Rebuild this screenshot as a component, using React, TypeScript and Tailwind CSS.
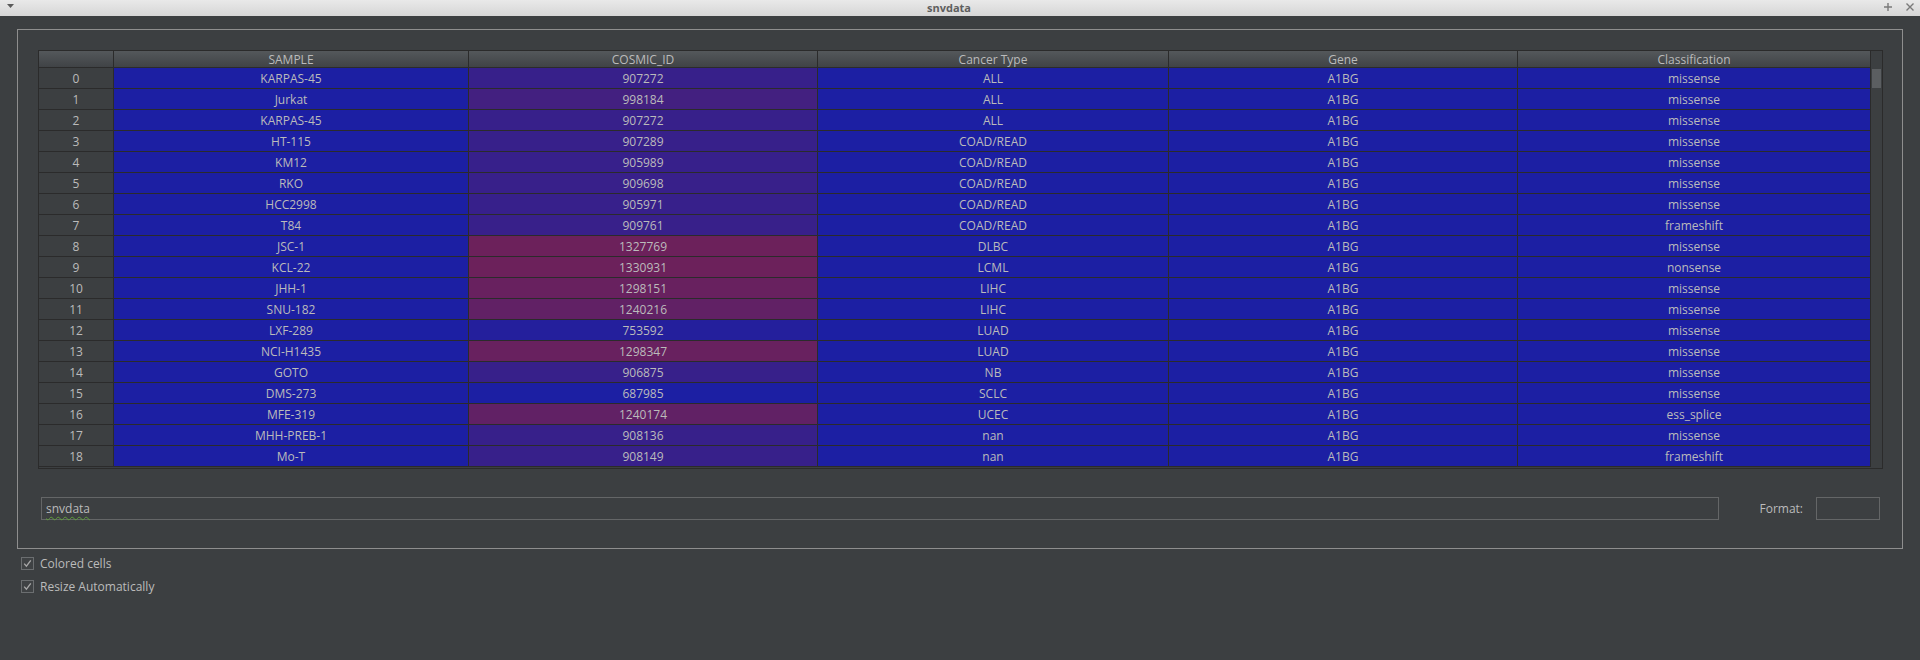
import React from "react";

type Row = [string, number, string, string, string];

const rows: Row[] = [
  ["KARPAS-45", 907272, "ALL", "A1BG", "missense"],
  ["Jurkat", 998184, "ALL", "A1BG", "missense"],
  ["KARPAS-45", 907272, "ALL", "A1BG", "missense"],
  ["HT-115", 907289, "COAD/READ", "A1BG", "missense"],
  ["KM12", 905989, "COAD/READ", "A1BG", "missense"],
  ["RKO", 909698, "COAD/READ", "A1BG", "missense"],
  ["HCC2998", 905971, "COAD/READ", "A1BG", "missense"],
  ["T84", 909761, "COAD/READ", "A1BG", "frameshift"],
  ["JSC-1", 1327769, "DLBC", "A1BG", "missense"],
  ["KCL-22", 1330931, "LCML", "A1BG", "nonsense"],
  ["JHH-1", 1298151, "LIHC", "A1BG", "missense"],
  ["SNU-182", 1240216, "LIHC", "A1BG", "missense"],
  ["LXF-289", 753592, "LUAD", "A1BG", "missense"],
  ["NCI-H1435", 1298347, "LUAD", "A1BG", "missense"],
  ["GOTO", 906875, "NB", "A1BG", "missense"],
  ["DMS-273", 687985, "SCLC", "A1BG", "missense"],
  ["MFE-319", 1240174, "UCEC", "A1BG", "ess_splice"],
  ["MHH-PREB-1", 908136, "nan", "A1BG", "missense"],
  ["Mo-T", 908149, "nan", "A1BG", "frameshift"],
];

const MIN = 687985;
const MAX = 1330931;

function cosmicColor(v: number): string {
  const t = (v - MIN) / (MAX - MIN);
  const r = Math.round(28 + t * 80);
  const g = Math.round(31 + t * 2);
  const b = Math.round(163 - t * 72);
  return `rgb(${r},${g},${b})`;
}

const headers = ["", "SAMPLE", "COSMIC_ID", "Cancer Type", "Gene", "Classification"];

function TitleBar() {
  return (
    <div className="relative h-[16px] w-full bg-linear-to-b from-[#e9e9e9] to-[#d6d6d6] flex items-center justify-center">
      <svg className="absolute left-[7px] top-[4px]" width="7" height="4" viewBox="0 0 7 4">
        <polygon points="0,0 7,0 3.5,4" fill="#5a5a5a" />
      </svg>
      <span className="pr-[22px] text-[11px] font-bold leading-[16px] text-[#5e5e5e]">snvdata</span>
      <svg className="absolute left-[1884px] top-[3px]" width="8" height="8" viewBox="0 0 8 8">
        <path d="M4 0 V8 M0 4 H8" stroke="#7a7a7a" strokeWidth="1.4" />
      </svg>
      <svg className="absolute left-[1906px] top-[3px]" width="8" height="8" viewBox="0 0 8 8">
        <path d="M0.5 0.5 L7.5 7.5 M7.5 0.5 L0.5 7.5" stroke="#7a7a7a" strokeWidth="1.4" />
      </svg>
    </div>
  );
}

function Check({ label }: { label: string }) {
  return (
    <div className="h-[23px] flex items-center">
      <div className="w-[13px] h-[13px] border border-[#6b6e70] bg-[#3f4244] flex items-center justify-center">
        <svg width="11" height="11" viewBox="0 0 11 11">
          <path d="M2.2 5.6 L4.4 8.2 L8.8 2.4" stroke="#a8a8a8" strokeWidth="1.3" fill="none" />
        </svg>
      </div>
      <span className="ml-[6px] text-[12px] leading-[16px] text-[#bbbbbb]">{label}</span>
    </div>
  );
}

const cell = "h-[21px] pt-px border-r border-b border-[#2b2b2b] text-center text-[12px] leading-[20px] text-[#bbbbbb]";

export default function App() {
  return (
    <div className="w-[1920px] h-[660px] overflow-hidden bg-[#3c3f41] flex flex-col font-['Open_Sans','Noto_Sans',sans-serif]">
      <TitleBar />
      <div className="mx-[17px] mt-[13px] border border-[#8e8e8e] pt-[20px] pl-[20px] pr-[19px] pb-[28px]">
        <div className="flex w-[1845px] border border-[#2b2b2b] pb-px">
          <div className="grid grid-cols-[75px_355px_349px_351px_349px_353px]">
            {headers.map((h, i) => (
              <div
                key={"h" + i}
                className="h-[17px] pt-px border-r border-b border-[#2b2b2b] bg-linear-to-b from-[#54585b] to-[#404346] text-center text-[12px] leading-[16px] text-[#bbbbbb]"
              >
                {h}
              </div>
            ))}
            {rows.map((r, i) => (
              <React.Fragment key={i}>
                <div className={cell + " bg-[#3c3f41]"}>{i}</div>
                <div className={cell + " bg-[#1c1fa3]"}>{r[0]}</div>
                <div className={cell} style={{ backgroundColor: cosmicColor(r[1]) }}>
                  {r[1]}
                </div>
                <div className={cell + " bg-[#1c1fa3]"}>{r[2]}</div>
                <div className={cell + " bg-[#1c1fa3]"}>{r[3]}</div>
                <div className={cell + " bg-[#1c1fa3]"}>{r[4]}</div>
              </React.Fragment>
            ))}
          </div>
          <div className="w-[11px] bg-[#3c3f41]">
            <div className="mt-[18px] mx-[1px] w-[9px] h-[19px] bg-[#5b5e61]" />
          </div>
        </div>
        <div className="mt-[28px] flex items-center px-[3px] w-[1845px]">
          <div className="flex-1 h-[23px] border border-[#646667] pl-[4px] text-[12px] leading-[21px] text-[#bbbbbb]">
            <span className="underline decoration-wavy decoration-[#5f9e3b] decoration-1 underline-offset-[3px]">snvdata</span>
          </div>
          <span className="ml-[40px] text-[12px] leading-[16px] text-[#bbbbbb]">Format:</span>
          <div className="ml-[13px] w-[64px] h-[23px] border border-[#646667]" />
        </div>
      </div>
      <div className="ml-[21px] mt-[3px] flex flex-col">
        <Check label="Colored cells" />
        <Check label="Resize Automatically" />
      </div>
    </div>
  );
}
